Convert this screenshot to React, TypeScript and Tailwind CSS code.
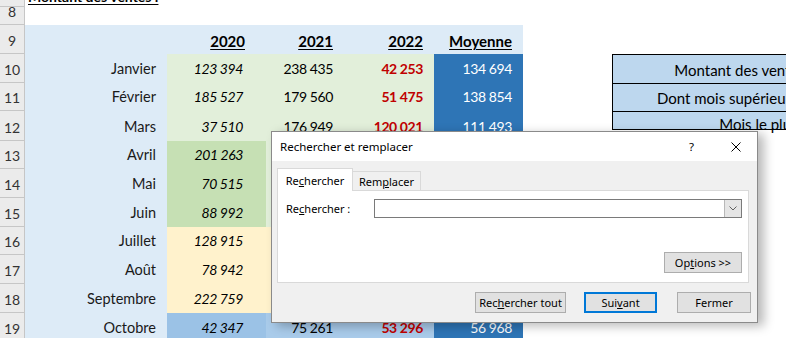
const excel = "font-['Lato',sans-serif] text-[14px] leading-[18px]";
const ui = "font-['Noto_Sans',sans-serif] text-[11px] leading-[15px]";

type Row = {
  n: number;
  h: string;
  label: string;
  c: string;
  d: string;
  e: string;
  f: string;
  cBg: string;
  deBg: string;
  box?: string;
  boxLast?: boolean;
};

const rows: Row[] = [
  { n: 10, h: 'h-[29px]', label: 'Janvier', c: '123 394', d: '238 435', e: '42 253', f: '134 694', cBg: 'bg-[#E2EFDA]', deBg: 'bg-[#E2EFDA]', box: 'Montant des ventes annuelles' },
  { n: 11, h: 'h-[28px]', label: 'Février', c: '185 527', d: '179 560', e: '51 475', f: '138 854', cBg: 'bg-[#E2EFDA]', deBg: 'bg-[#E2EFDA]', box: 'Dont mois supérieurs à la moyenne' },
  { n: 12, h: 'h-[30px]', label: 'Mars', c: '37 510', d: '176 949', e: '120 021', f: '111 493', cBg: 'bg-[#E2EFDA]', deBg: 'bg-[#E2EFDA]', box: 'Mois le plus fort', boxLast: true },
  { n: 13, h: 'h-[28px]', label: 'Avril', c: '201 263', d: '', e: '', f: '', cBg: 'bg-[#C6E0B4]', deBg: 'bg-[#E2EFDA]' },
  { n: 14, h: 'h-[29px]', label: 'Mai', c: '70 515', d: '', e: '', f: '', cBg: 'bg-[#C6E0B4]', deBg: 'bg-[#E2EFDA]' },
  { n: 15, h: 'h-[29px]', label: 'Juin', c: '88 992', d: '', e: '', f: '', cBg: 'bg-[#C6E0B4]', deBg: 'bg-[#E2EFDA]' },
  { n: 16, h: 'h-[28px]', label: 'Juillet', c: '128 915', d: '', e: '', f: '', cBg: 'bg-[#FFF2CC]', deBg: 'bg-[#FFF2CC]' },
  { n: 17, h: 'h-[29px]', label: 'Août', c: '78 942', d: '', e: '', f: '', cBg: 'bg-[#FFF2CC]', deBg: 'bg-[#FFF2CC]' },
  { n: 18, h: 'h-[29px]', label: 'Septembre', c: '222 759', d: '', e: '', f: '', cBg: 'bg-[#FFF2CC]', deBg: 'bg-[#FFF2CC]' },
  { n: 19, h: 'h-[29px]', label: 'Octobre', c: '42 347', d: '75 261', e: '53 296', f: '56 968', cBg: 'bg-[#9BC2E6]', deBg: 'bg-[#A9CBEA]' },
];

const RowHead = ({ n, h }: { n?: number; h: string }) => (
  <div className={`${h} flex w-[25px] shrink-0 items-end justify-center border-r border-b border-[#C6C6C6] bg-[#EBEBEB] pb-[3px] text-[14px] text-[#333]`}>
    {n}
  </div>
);

const Btn = ({ children, w, focus }: { children: React.ReactNode; w: string; focus?: boolean }) => (
  <div
    className={`${w} flex h-[21px] items-center justify-center bg-[#E1E1E1] ${
      focus ? 'border-2 border-[#0078D7]' : 'border border-[#ADADAD]'
    }`}
  >
    {children}
  </div>
);

const num = 'tracking-[-0.4px]';

export default function App() {
  return (
    <div className="relative h-[338px] w-[786px] overflow-hidden bg-white">
      <div className={`${excel} text-black`}>
        {/* row 7, cut at the top */}
        <div className="flex h-[7px] overflow-hidden">
          <RowHead h="h-[7px]" />
          <div className="-mt-[12px] pl-[3px] font-bold underline underline-offset-2">Montant des ventes :</div>
        </div>
        <div className="flex">
          <RowHead n={8} h="h-[18px]" />
        </div>
        {/* row 9 headers */}
        <div className="flex h-[29px] text-[15px]">
          <RowHead n={9} h="h-[29px]" />
          <div className="w-[142px] bg-[#DDEBF7]" />
          <div className="flex w-[99px] items-end justify-end bg-[#DDEBF7] pr-[21px] pb-[4px] font-bold underline underline-offset-2">2020</div>
          <div className="flex w-[78px] items-end justify-end bg-[#DDEBF7] pr-[11px] pb-[4px] font-bold underline underline-offset-2">2021</div>
          <div className="flex w-[90px] items-end justify-end bg-[#DDEBF7] pr-[11px] pb-[4px] font-bold underline underline-offset-2">2022</div>
          <div className="flex w-[89px] items-end justify-end bg-[#DDEBF7] pr-[11px] pb-[4px] font-bold underline underline-offset-2">Moyenne</div>
        </div>
        {rows.map((r) => (
          <div key={r.n} className={`flex ${r.h}`}>
            <RowHead n={r.n} h={r.h} />
            <div className="flex w-[142px] shrink-0 items-end justify-end bg-[#DDEBF7] pr-[11px] pb-[5px] text-[14.5px] text-[#1a1a1a]">{r.label}</div>
            <div className={`flex w-[99px] shrink-0 items-end justify-end ${r.cBg} pr-[23px] pb-[5px] italic ${num}`}>{r.c}</div>
            <div className={`flex w-[78px] shrink-0 items-end justify-end ${r.deBg} pr-[11px] pb-[5px] ${num}`}>{r.d}</div>
            <div className={`flex w-[90px] shrink-0 items-end justify-end ${r.deBg} pr-[11px] pb-[5px] font-bold text-[#C00000] ${num}`}>{r.e}</div>
            <div className={`flex w-[89px] shrink-0 items-end justify-end bg-[#2E75B6] pr-[11px] pb-[5px] text-white ${num}`}>{r.f}</div>
            <div className="w-[89px] shrink-0" />
            {r.box && (
              <div className="w-[320px] shrink-0">
                <div
                  className={`flex items-end justify-center border-t border-l border-black bg-[#BDD7EE] text-[15px] ${
                    r.boxLast ? 'h-[19px] border-b' : 'h-full pb-[4px]'
                  }`}
                >
                  <span className={r.boxLast ? '-mb-[4px]' : ''}>{r.box}</span>
                </div>
              </div>
            )}
          </div>
        ))}
      </div>

      {/* Rechercher et remplacer dialog */}
      <div className={`${ui} absolute top-[131px] left-[271px] flex h-[192px] w-[487px] flex-col border border-[#8A8A8A] bg-[#F0F0F0] text-black shadow-[6px_3px_10px_rgba(0,0,0,0.28)]`}>
        <div className="flex h-[29px] shrink-0 items-center bg-white pl-[8px] text-[11.5px]">
          <span>Rechercher et remplacer</span>
          <span className="ml-auto">?</span>
          <svg className="mr-[16px] ml-[37px]" width="10" height="10" viewBox="0 0 10 10">
            <path d="M0.5 0.5 9.5 9.5 M9.5 0.5 0.5 9.5" stroke="#000" strokeWidth="1" fill="none" />
          </svg>
        </div>
        <div className="flex flex-1 flex-col pt-[7px] pr-[6px] pl-[5px]">
          <div className="flex items-end">
            <div className="relative z-10 -mb-px flex h-[23px] w-[76px] items-center justify-center border border-b-0 border-[#D9D9D9] bg-white">
              Re<u>c</u>hercher
            </div>
            <div className="flex h-[19px] w-[68px] items-center justify-center border border-b-0 border-l-0 border-[#D9D9D9] bg-[#F0F0F0]">
              Rem<u>p</u>lacer
            </div>
          </div>
          <div className="flex h-[93px] w-[472px] flex-col border border-[#D9D9D9] bg-white pr-[6px] pl-[8px]">
            <div className="mt-[8px] flex items-center">
              <span>
                Re<u>c</u>hercher :
              </span>
              <div className="ml-auto flex h-[19px] w-[368px] border border-[#7A7A7A] bg-white">
                <div className="ml-auto flex w-[17px] items-center justify-center border-l border-[#B8B8B8] bg-[#E5E5E5]">
                  <svg width="8" height="5" viewBox="0 0 8 5">
                    <path d="M0.5 0.5 4 4 7.5 0.5" stroke="#606060" strokeWidth="1" fill="none" />
                  </svg>
                </div>
              </div>
            </div>
            <div className="mt-auto mb-[9px] self-end">
              <Btn w="w-[78px]">
                Op<u>t</u>ions &gt;&gt;
              </Btn>
            </div>
          </div>
          <div className="mt-[9px] flex justify-end">
            <Btn w="w-[91px]">
              Rec<u>h</u>ercher tout
            </Btn>
            <div className="ml-[18px]">
              <Btn w="w-[73px]" focus>
                Sui<u>v</u>ant
              </Btn>
            </div>
            <div className="ml-[20px]">
              <Btn w="w-[74px]">Fermer</Btn>
            </div>
          </div>
        </div>
      </div>
    </div>
  );
}
